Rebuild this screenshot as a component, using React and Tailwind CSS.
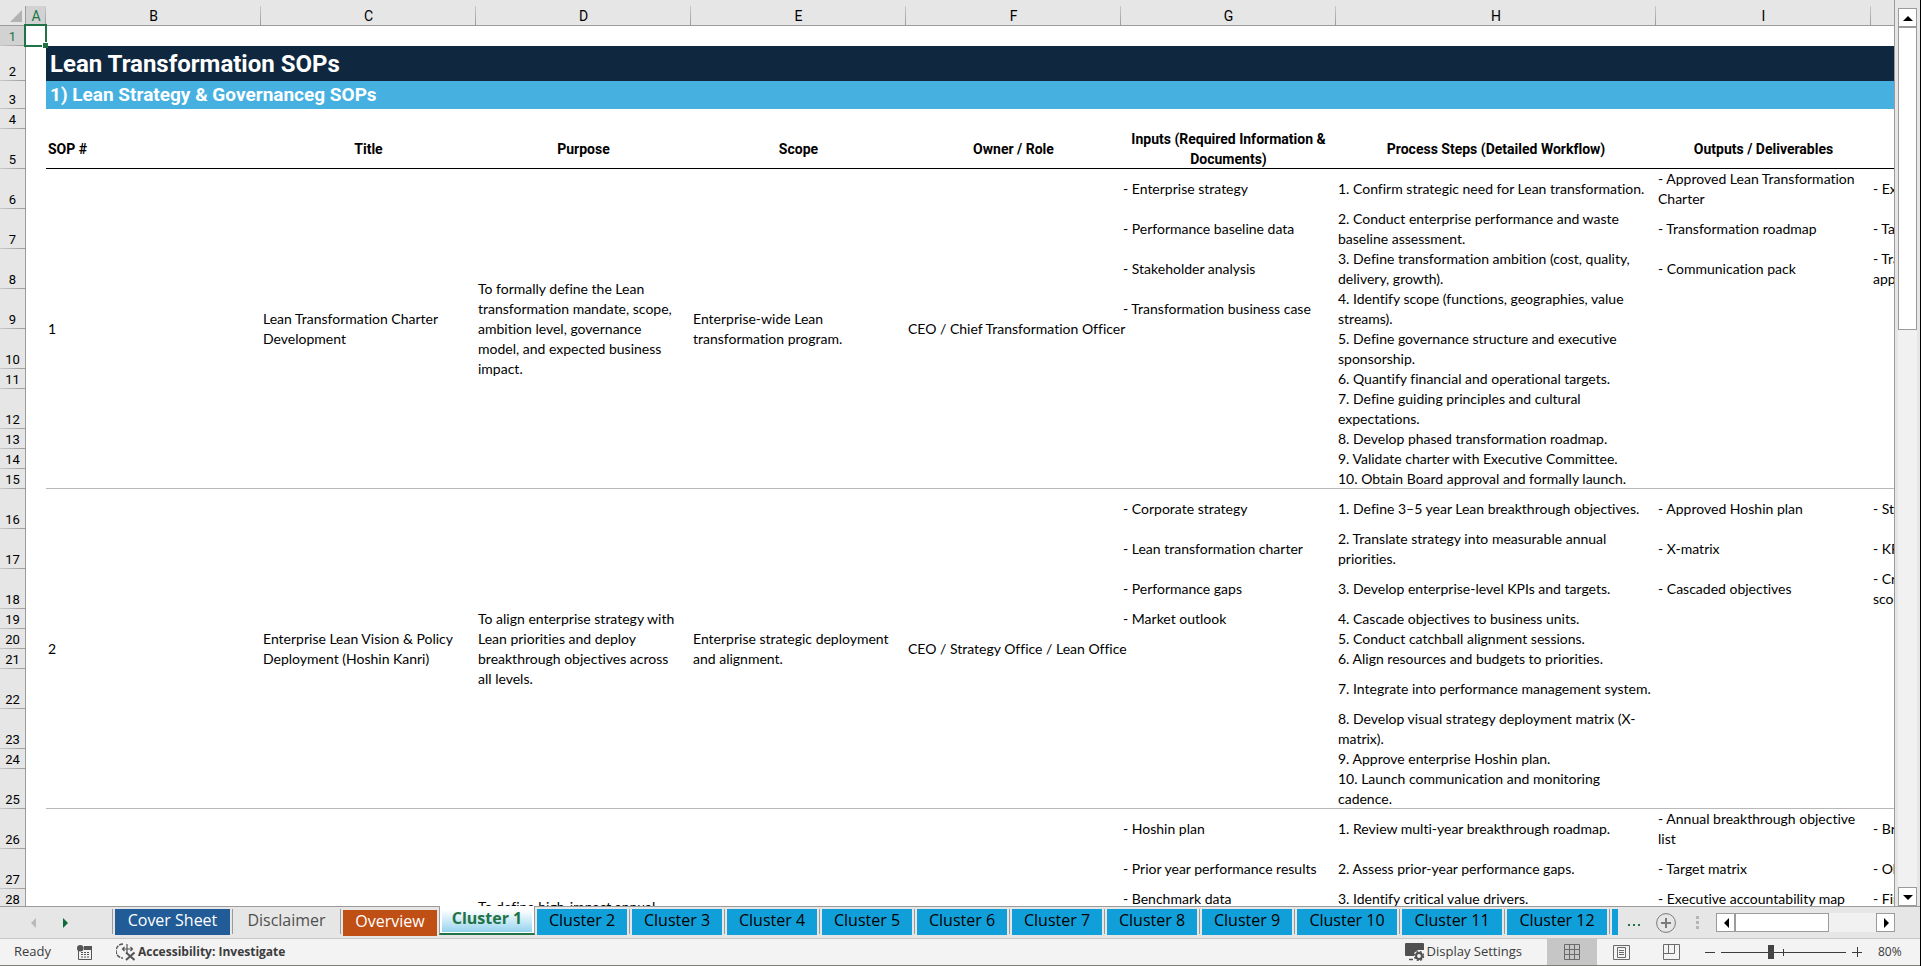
const rows = [
  { n: 6, h: 40, g: "- Enterprise strategy", s: "1. Confirm strategic need for Lean transformation.", o: "- Approved Lean Transformation\nCharter", k: "- Executive alignment" },
  { n: 7, h: 40, g: "- Performance baseline data", s: "2. Conduct enterprise performance and waste\nbaseline assessment.", o: "- Transformation roadmap", k: "- Targets agreed" },
  { n: 8, h: 40, g: "- Stakeholder analysis", s: "3. Define transformation ambition (cost, quality,\ndelivery, growth).", o: "- Communication pack", k: "- Transformation charter\napproved" },
  { n: 9, h: 40, g: "- Transformation business case", s: "4. Identify scope (functions, geographies, value\nstreams)." },
  { n: 10, h: 40, s: "5. Define governance structure and executive\nsponsorship." },
  { n: 11, h: 20, s: "6. Quantify financial and operational targets." },
  { n: 12, h: 40, s: "7. Define guiding principles and cultural\nexpectations." },
  { n: 13, h: 20, s: "8. Develop phased transformation roadmap." },
  { n: 14, h: 20, s: "9. Validate charter with Executive Committee." },
  { n: 15, h: 20, s: "10. Obtain Board approval and formally launch.", end: true },
  { n: 16, h: 40, g: "- Corporate strategy", s: "1. Define 3–5 year Lean breakthrough objectives.", o: "- Approved Hoshin plan", k: "- Strategy alignment" },
  { n: 17, h: 40, g: "- Lean transformation charter", s: "2. Translate strategy into measurable annual\npriorities.", o: "- X-matrix", k: "- KPI coverage" },
  { n: 18, h: 40, g: "- Performance gaps", s: "3. Develop enterprise-level KPIs and targets.", o: "- Cascaded objectives", k: "- Cross-functional\nscorecard" },
  { n: 19, h: 20, g: "- Market outlook", s: "4. Cascade objectives to business units." },
  { n: 20, h: 20, s: "5. Conduct catchball alignment sessions." },
  { n: 21, h: 20, s: "6. Align resources and budgets to priorities." },
  { n: 22, h: 40, s: "7. Integrate into performance management system." },
  { n: 23, h: 40, s: "8. Develop visual strategy deployment matrix (X-\nmatrix)." },
  { n: 24, h: 20, s: "9. Approve enterprise Hoshin plan." },
  { n: 25, h: 40, s: "10. Launch communication and monitoring\ncadence.", end: true },
  { n: 26, h: 40, g: "- Hoshin plan", s: "1. Review multi-year breakthrough roadmap.", o: "- Annual breakthrough objective\nlist", k: "- Breakthrough rate" },
  { n: 27, h: 40, g: "- Prior year performance results", s: "2. Assess prior-year performance gaps.", o: "- Target matrix", k: "- Objectives met" },
  { n: 28, h: 20, g: "- Benchmark data", s: "3. Identify critical value drivers.", o: "- Executive accountability map", k: "- Financial impact" },
  { n: "", h: 20 },
];

// merged cells B:F, keyed by the first row of each SOP
const sops = {
  6: {
    span: 10,
    id: "1",
    title: "Lean Transformation Charter\nDevelopment",
    purpose: "To formally define the Lean\ntransformation mandate, scope,\nambition level, governance\nmodel, and expected business\nimpact.",
    scope: "Enterprise-wide Lean\ntransformation program.",
    owner: "CEO / Chief Transformation Officer",
  },
  16: {
    span: 10,
    id: "2",
    title: "Enterprise Lean Vision & Policy\nDeployment (Hoshin Kanri)",
    purpose: "To align enterprise strategy with\nLean priorities and deploy\nbreakthrough objectives across\nall levels.",
    scope: "Enterprise strategic deployment\nand alignment.",
    owner: "CEO / Strategy Office / Lean Office",
  },
  26: {
    span: 4,
    purpose: "To define high-impact annual",
    bottom: true,
  },
};

const headings = [
  "Title",
  "Purpose",
  "Scope",
  "Owner / Role",
  "Inputs (Required Information &\nDocuments)",
  "Process Steps (Detailed Workflow)",
  "Outputs / Deliverables",
];

const clusters = [2, 3, 4, 5, 6, 7, 8, 9, 10, 11, 12];

const BLACK_LINE = "shadow-[inset_0_-1px_0_#000]";
const GREY_LINE = "shadow-[inset_0_-1px_0_#b8b8b8]";

function RowHead({ n, h, active }) {
  return (
    <th
      scope="row"
      style={{ height: h }}
      className={`border-r border-[#9b9b9b] bg-linear-to-r from-[#c9c9c9] to-[#9b9b9b] bg-[length:100%_1px] bg-bottom bg-no-repeat p-0 text-center align-bottom font-[Roboto,sans-serif] text-[13px] font-normal leading-[19px] ${
        active ? "bg-[#d2d2d2] text-[#217346]" : "bg-[#e6e6e6]"
      }`}
    >
      {n}
    </th>
  );
}

function Cell({ children, span, line, bottom }) {
  return (
    <td
      rowSpan={span}
      className={`whitespace-pre px-0.5 ${bottom ? "pt-0 pb-3 align-bottom" : "py-0 align-middle"} ${line ? GREY_LINE : ""}`}
    >
      {children}
    </td>
  );
}

function Sheet() {
  return (
    <table className="w-[2086px] table-fixed border-separate border-spacing-0 text-sm leading-5 text-black [font-variant-ligatures:none]">
      <colgroup>
        <col className="w-[26px]" />
        <col className="w-5" />
        <col className="w-[215px]" />
        <col className="w-[215px]" />
        <col className="w-[215px]" />
        <col className="w-[215px]" />
        <col className="w-[215px]" />
        <col className="w-[215px]" />
        <col className="w-[320px]" />
        <col className="w-[215px]" />
        <col className="w-[215px]" />
      </colgroup>
      <thead>
        <tr className="bg-[#e6e6e6] font-[Roboto,sans-serif]">
          <th aria-label="Select all" className="h-[26px] border-b border-[#9b9b9b] p-0 pt-1.5">
            <div className="h-[19px] border-r border-[#9b9b9b] pt-1 pl-2.5">
              <svg viewBox="0 0 12 12" className="h-3 w-3">
                <path d="M12 0V12H0Z" fill="#b2b2b2" />
              </svg>
            </div>
          </th>
          {["A", "B", "C", "D", "E", "F", "G", "H", "I", "J"].map((c) => (
            <th key={c} scope="col" className="border-b border-[#9b9b9b] p-0 pt-1.5 text-center font-normal">
              <div
                className={`h-[19px] bg-linear-to-b from-[#c9c9c9] to-[#9b9b9b] bg-[length:1px_100%] bg-right bg-no-repeat leading-5 ${
                  c === "A" ? "bg-[#d2d2d2] text-[#217346]" : ""
                }`}
              >
                {c === "J" ? "" : c}
              </div>
            </th>
          ))}
        </tr>
      </thead>
      <tbody>
        <tr>
          <RowHead n={1} h={20} active />
          <td className="relative p-0">
            <div className="absolute -top-0.5 -left-0.5 h-[23px] w-[23px] border-2 border-[#217346]">
              <div className="absolute -right-[3px] -bottom-[3px] h-[6px] w-[6px] border-t border-l border-white bg-[#217346]" />
            </div>
          </td>
          <td colSpan={9} />
        </tr>
        <tr>
          <RowHead n={2} h={35} />
          <td />
          <td colSpan={9} className="bg-[#0f2840] px-1 py-0 font-[Roboto,sans-serif] text-2xl leading-[34px] font-bold text-white">
            Lean Transformation SOPs
          </td>
        </tr>
        <tr>
          <RowHead n={3} h={28} />
          <td />
          <td colSpan={9} className="bg-[#46b1e1] px-1 py-0 font-[Roboto,sans-serif] text-[19px] leading-7 font-bold text-white">
            1) Lean Strategy &amp; Governanceg SOPs
          </td>
        </tr>
        <tr>
          <RowHead n={4} h={20} />
          <td colSpan={10} />
        </tr>
        <tr className="font-[Roboto,sans-serif]">
          <RowHead n={5} h={40} />
          <td />
          <th className={`p-0 pl-0.5 text-left font-bold ${BLACK_LINE}`}>SOP #</th>
          {headings.map((t) => (
            <th key={t} className={`p-0 text-center font-bold whitespace-pre ${BLACK_LINE}`}>
              {t}
            </th>
          ))}
          <th className={BLACK_LINE} />
        </tr>
        {rows.map((r) => {
          const sop = sops[r.n];
          return (
            <tr key={r.n}>
              <RowHead n={r.n} h={r.h} />
              <td />
              {sop && (
                <>
                  <Cell span={sop.span} line={!sop.bottom}>{sop.id}</Cell>
                  <Cell span={sop.span} line={!sop.bottom}>{sop.title}</Cell>
                  <Cell span={sop.span} line={!sop.bottom} bottom={sop.bottom}>{sop.purpose}</Cell>
                  <Cell span={sop.span} line={!sop.bottom}>{sop.scope}</Cell>
                  <Cell span={sop.span} line={!sop.bottom}>{sop.owner}</Cell>
                </>
              )}
              <Cell line={r.end}>{r.g}</Cell>
              <Cell line={r.end}>{r.s}</Cell>
              <Cell line={r.end}>{r.o}</Cell>
              <Cell line={r.end}>{r.k}</Cell>
            </tr>
          );
        })}
      </tbody>
    </table>
  );
}

function Arrow({ d, className = "" }) {
  return (
    <svg viewBox="0 0 10 10" className={`h-2.5 w-2.5 ${className}`} fill="currentColor">
      <path d={d} />
    </svg>
  );
}

const UP = "M0 8L5 3L10 8Z";
const DOWN = "M0 3L5 8L10 3Z";
const LEFT = "M8 0L3 5L8 10Z";
const RIGHT = "M3 0L8 5L3 10Z";

function VerticalScroll() {
  return (
    <div className="flex w-[25px] shrink-0 flex-col bg-[#e6e6e6] px-[3px] pt-2">
      <button aria-label="Scroll up" className="flex h-[19px] items-center justify-center border border-[#9b9b9b] bg-white">
        <Arrow d={UP} />
      </button>
      <div className="flex-1 bg-[#f1f1f1]">
        <div className="h-[303px] border border-[#9b9b9b] bg-white" />
      </div>
      <button aria-label="Scroll down" className="flex h-[19px] items-center justify-center border border-[#9b9b9b] bg-white">
        <Arrow d={DOWN} />
      </button>
    </div>
  );
}

function Tab({ children, className }) {
  return (
    <div className="flex shrink-0 border-r border-[#9b9b9b] px-0.5">
      <button className={`h-[26px] pb-1 leading-[22px] ${className}`}>{children}</button>
    </div>
  );
}

function TabBar() {
  return (
    <div className="flex h-[33px] shrink-0 border-b border-[#c6c6c6] bg-[#e6e6e6] font-['Open_Sans','Noto_Sans',sans-serif] text-base">
      <div className="flex w-28 shrink-0 items-center border-t border-[#9b9b9b] pl-7">
        <button aria-label="Previous sheet" className="text-[#b9b9b9]">
          <Arrow d={LEFT} />
        </button>
        <button aria-label="Next sheet" className="ml-[22px] text-[#0e6b39]">
          <Arrow d={RIGHT} />
        </button>
      </div>
      <div className="flex border-t border-[#9b9b9b] pt-0.5 pb-1">
        <div className="border-l border-[#9b9b9b]" />
        <Tab className="w-[115px] bg-[#215c98] text-white">Cover Sheet</Tab>
        <Tab className="w-[103px] text-[#505050]">Disclaimer</Tab>
        <div className="pl-0.5">
          <button className="h-[26px] w-[94px] bg-[#c04f15] pb-1 leading-[22px] text-white">Overview</button>
        </div>
      </div>
      <div className="w-0.5 border-t border-[#9b9b9b]" />
      <div className="h-[29px] w-[96px] shrink-0 border-x border-b-2 border-x-[#9b9b9b] border-b-[#217346] bg-white px-0.5 pb-px">
        <button className="h-[26px] w-full bg-linear-to-b from-white from-15% to-[#94d3ee] pb-0.5 leading-6 font-bold text-[#217346]">
          Cluster 1
        </button>
      </div>
      <div className="flex flex-1 border-t border-[#9b9b9b]">
        <div className="flex pt-0.5 pb-1">
          {clusters.map((c) => (
            <Tab key={c} className={`bg-[#119fd9] text-black ${c > 9 ? "w-[100px]" : "w-[90px]"}`}>
              Cluster {c}
            </Tab>
          ))}
          <div className="ml-0.5 h-[26px] w-1.5 bg-[#119fd9]" />
        </div>
        <button aria-label="More sheets" className="ml-2.5 flex items-center gap-[3px] pt-1">
          <span className="h-0.5 w-0.5 bg-[#217346]" />
          <span className="h-0.5 w-0.5 bg-[#217346]" />
          <span className="h-0.5 w-0.5 bg-[#217346]" />
        </button>
        <button aria-label="New sheet" className="ml-4">
          <svg viewBox="0 0 20 20" className="h-5 w-5" fill="none" stroke="#7a7a7a">
            <circle cx="10" cy="10" r="9.4" />
            <path d="M10 5V15M5 10H15" strokeWidth="2" />
          </svg>
        </button>
        <div className="ml-5 flex flex-col justify-center gap-0.5">
          <span className="h-[3px] w-[3px] bg-[#b5b5b5]" />
          <span className="h-[3px] w-[3px] bg-[#b5b5b5]" />
          <span className="h-[3px] w-[3px] bg-[#b5b5b5]" />
        </div>
        <div className="mt-1.5 mr-[25px] ml-auto flex h-[19px] w-[179px] bg-[#f1f1f1]">
          <button aria-label="Scroll left" className="flex w-[19px] items-center justify-center border border-[#9b9b9b] bg-white">
            <Arrow d={LEFT} />
          </button>
          <div className="w-[94px] border border-[#9b9b9b] bg-white" />
          <button aria-label="Scroll right" className="ml-auto flex w-[19px] items-center justify-center border border-[#9b9b9b] bg-white">
            <Arrow d={RIGHT} />
          </button>
        </div>
      </div>
    </div>
  );
}

function StatusBar() {
  return (
    <div className="flex h-[27px] shrink-0 items-center border-b border-[#7f7f7a] bg-[#f3f3f3] font-['Open_Sans','Noto_Sans',sans-serif] text-[13px] text-[#3b3b3b]">
      <span className="ml-3.5 w-[63px]">Ready</span>
      <button aria-label="Record macro">
        <svg viewBox="0 0 15 15" className="h-[15px] w-[15px]">
          <path d="M1.500 6V14.500H14.500V1.500H7" fill="none" stroke="#555" />
          <path d="M7 1H15V5H7Z" fill="#555" />
          <circle cx="3.300" cy="3.300" r="3.300" fill="#555" />
          <path d="M4 7.500H13M4 9.500H13M4 12H13" stroke="#555" strokeDasharray="2 1" />
        </svg>
      </button>
      <button className="ml-6 flex items-center gap-[3px] text-[12px] font-bold">
        <svg viewBox="0 0 19 18" className="h-[18px] w-[19px]" fill="none" stroke="#555">
          <path d="M7 1A7 7 0 0 0 7 15" strokeWidth="1.500" strokeDasharray="4 1" />
          <path d="M6 6H17M11 1V10M8.500 4L6.500 6L8.500 8M14.500 4L16.500 6L14.500 8" strokeWidth="1.200" />
          <path d="M10 9.500L18.500 17M18.500 9.500L10 17" strokeWidth="2" />
        </svg>
        Accessibility: Investigate
      </button>
      <button className="ml-auto flex items-center gap-0.5">
        <svg viewBox="0 0 20 18" className="h-[18px] w-5">
          <path d="M1 0H18Q19 0 19 1V7H13L9 10V13H1Q0 13 0 12V1Q0 0 1 0Z" fill="#505050" />
          <path d="M4 16.500H8" stroke="#505050" strokeWidth="1.500" />
          <circle cx="14" cy="13" r="2.900" fill="#f3f3f3" stroke="#505050" strokeWidth="2" />
          <circle cx="14" cy="13" r="4.400" fill="none" stroke="#505050" strokeWidth="1.500" strokeDasharray="2 1.500" />
        </svg>
        Display Settings
      </button>
      <div className="ml-[25px] flex h-full">
        <button aria-label="Normal view" className="flex w-[50px] items-center justify-center bg-[#c6c6c6]">
          <svg viewBox="0 0 16 16" className="h-4 w-4" fill="none" stroke="#6a6a6a">
            <path d="M.5 .5H15.500V15.500H.5ZM5.500 0V16M10.500 0V16M0 5.500H16M0 10.500H16" />
          </svg>
        </button>
        <button aria-label="Page layout" className="flex w-[49px] items-center justify-center">
          <svg viewBox="0 0 17 15" className="h-[15px] w-[17px]" fill="none" stroke="#6a6a6a">
            <path d="M.5 .5H16.500V14.500H.5ZM4.500 2.500H12.500V12.500H4.500ZM6 5.500H11M6 7.500H11M6 9.500H11" />
          </svg>
        </button>
        <button aria-label="Page break preview" className="flex w-[51px] items-center justify-center">
          <svg viewBox="0 0 17 16" className="h-4 w-[17px]" fill="none" stroke="#6a6a6a">
            <path d="M.5 .5H16.500V15.500H.5ZM5.500 .5V9.500M11.500 .5V9.500M.5 9.500H11.500" />
          </svg>
        </button>
      </div>
      <button aria-label="Zoom out" className="ml-2 h-px w-2.5 bg-[#3b3b3b]" />
      <div className="relative ml-1.5 h-4 w-[125px]">
        <input type="range" aria-label="Zoom" min="10" max="190" defaultValue="80" className="absolute inset-0 w-full opacity-0" />
        <svg viewBox="0 0 125 16" className="h-4 w-[125px]">
          <path d="M0 8.500H125M62.500 5V12" stroke="#3b3b3b" />
          <path d="M47 1H53V15H47Z" fill="#444" />
        </svg>
      </div>
      <button aria-label="Zoom in" className="ml-1.5">
        <svg viewBox="0 0 10 10" className="h-2.5 w-2.5">
          <path d="M0 5.500H10M5.500 0V10" stroke="#3b3b3b" />
        </svg>
      </button>
      <span className="ml-4 w-[42px] text-xs">80%</span>
    </div>
  );
}

export default function App() {
  return (
    <div className="flex h-screen w-full flex-col overflow-hidden border-r border-black bg-[#e6e6e6] font-[Lato,'Open_Sans',sans-serif]">
      <div className="flex min-h-0 flex-1">
        <div className="min-w-0 flex-1 overflow-hidden border-r border-[#9b9b9b] bg-white">
          <Sheet />
        </div>
        <VerticalScroll />
      </div>
      <TabBar />
      <StatusBar />
    </div>
  );
}
